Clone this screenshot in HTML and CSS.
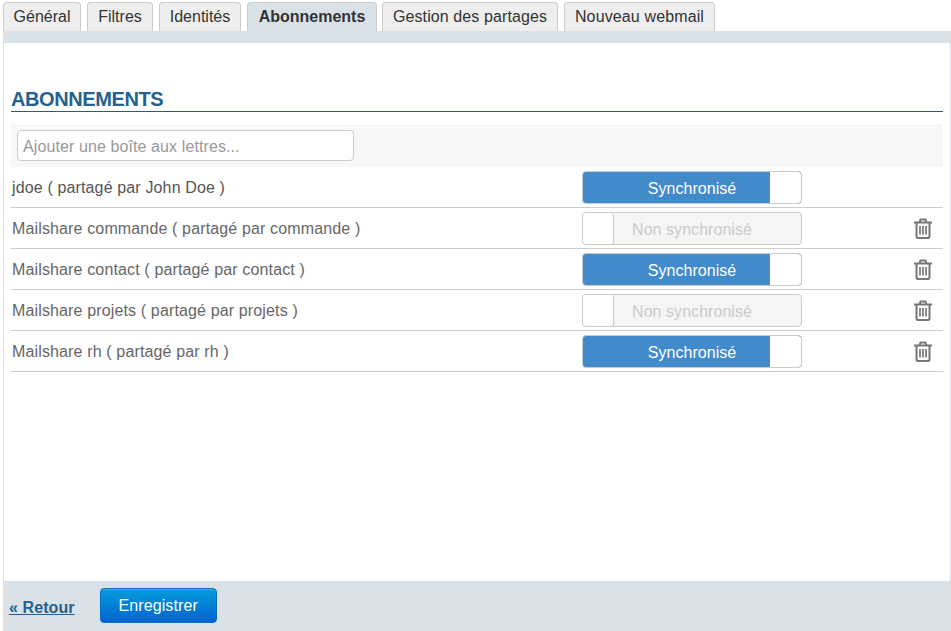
FILE: index.html
```html
<html>
  <head>
    <meta charset="utf-8">
    <title>Abonnements</title>
    <link rel="stylesheet" href="styles.css">
  </head>
  <body>
    <div class="tabs">
      <a class="tab tab-general">Général</a>
      <a class="tab tab-filters">Filtres</a>
      <a class="tab tab-identities">Identités</a>
      <a class="tab tab-subs active">Abonnements</a>
      <a class="tab tab-shares">Gestion des partages</a>
      <a class="tab tab-webmail">Nouveau webmail</a>
    </div>
    <div class="band"></div>

    <div class="content">
      <h2 class="title">ABONNEMENTS</h2>
      <div class="add-row">
        <input class="add-input" type="text" placeholder="Ajouter une boîte aux lettres...">
      </div>

      <div class="row first">
        <span class="name dark">jdoe ( partagé par John Doe )</span>
        <div class="switch on"><span class="label">Synchronisé</span><span class="knob"></span></div>
        <span class="trash"></span>
      </div>
      <div class="row">
        <span class="name">Mailshare commande ( partagé par commande )</span>
        <div class="switch off"><span class="knob"></span><span class="label">Non synchronisé</span></div>
        <span class="trash">
          <svg width="18" height="21" viewBox="0 0 18 21"><use href="#trash-icon"></use></svg>
        </span>
      </div>
      <div class="row">
        <span class="name">Mailshare contact ( partagé par contact )</span>
        <div class="switch on"><span class="label">Synchronisé</span><span class="knob"></span></div>
        <span class="trash">
          <svg width="18" height="21" viewBox="0 0 18 21"><use href="#trash-icon"></use></svg>
        </span>
      </div>
      <div class="row">
        <span class="name">Mailshare projets ( partagé par projets )</span>
        <div class="switch off"><span class="knob"></span><span class="label">Non synchronisé</span></div>
        <span class="trash">
          <svg width="18" height="21" viewBox="0 0 18 21"><use href="#trash-icon"></use></svg>
        </span>
      </div>
      <div class="row">
        <span class="name">Mailshare rh ( partagé par rh )</span>
        <div class="switch on"><span class="label">Synchronisé</span><span class="knob"></span></div>
        <span class="trash">
          <svg width="18" height="21" viewBox="0 0 18 21"><use href="#trash-icon"></use></svg>
        </span>
      </div>
    </div>

    <div class="footer">
      <a class="back" href="#">« Retour</a>
      <button class="save">Enregistrer</button>
    </div>

    <svg class="defs" width="0" height="0">
      <symbol id="trash-icon" viewBox="0 0 18 21">
        <path d="M0 4.5h18M5.5 4.5 6.5 1.5h5l1 3M2.5 4.5v13.7q0 1.8 1.8 1.8h9.4q1.8 0 1.8-1.8V4.5" fill="none" stroke="#777" stroke-width="2"/>
        <path d="M6 8v8.5M9 8v8.5M12 8v8.5" fill="none" stroke="#777" stroke-width="1.7"/>
      </symbol>
    </svg>
  </body>
</html>
```

FILE: styles.css
```css
* {
  box-sizing: border-box;
}
html,
body {
  margin: 0;
  height: 100%;
}
body {
  display: flex;
  flex-direction: column;
  height: 631px;
  overflow: hidden;
  background: #fff;
  font-family: "Liberation Sans", Arial, sans-serif;
  font-size: 16px;
  color: #666;
}

/* tabs */
.tabs {
  display: flex;
  gap: 6px;
  height: 31px;
  padding: 2px 0 0 3px;
}
.tab {
  height: 29px;
  line-height: 28px;
  text-align: center;
  color: #333;
  background: #eee;
  border: 1px solid #ccc;
  border-bottom: none;
  border-radius: 4px 4px 0 0;
}
.tab.active {
  font-weight: bold;
  background: #dae2e8;
}
.tab-general {
  width: 78px;
}
.tab-filters {
  width: 66px;
}
.tab-identities {
  width: 82px;
}
.tab-subs {
  width: 130px;
  margin-right: -1px;
}
.tab-shares {
  width: 176px;
  letter-spacing: 0.1px;
}
.tab-webmail {
  width: 151px;
  letter-spacing: 0.13px;
}
.band {
  height: 12px;
  margin-left: 3px;
  background: #dae2e8;
}

/* content */
.content {
  flex: 1;
  margin-left: 3px;
  padding: 46px 7px 0 7px;
  border-left: 1px solid #dae2e8;
  border-right: 1px solid #dae2e8;
}
.title {
  margin: 0;
  height: 23px;
  line-height: 21px;
  font-size: 20px;
  letter-spacing: -0.4px;
  font-weight: bold;
  color: #246190;
  border-bottom: 1px solid #2c5a7d;
}
.add-row {
  height: 43px;
  margin-top: 12px;
  padding: 6px;
  background: #f7f7f7;
}
.add-input {
  display: block;
  width: 337px;
  height: 31px;
  padding: 2px 5px 0;
  font-family: inherit;
  font-size: 16px;
  letter-spacing: 0.1px;
  background: #fff;
  border: 1px solid #ccc;
  border-radius: 4px;
}
.add-input::placeholder {
  color: #999;
  opacity: 1;
}
.row {
  display: flex;
  align-items: center;
  height: 41px;
  border-bottom: 1px solid #ccc;
}
.name {
  width: 571px;
  padding: 2px 0 0 1px;
  letter-spacing: 0.14px;
}
.name.dark {
  color: #555;
}

/* toggle */
.switch {
  position: relative;
  width: 220px;
  height: 33px;
  overflow: hidden;
  border: 1px solid #ccc;
  border-radius: 4px;
  text-align: center;
  line-height: 33px;
}
.switch .label {
  display: block;
  letter-spacing: 0.05px;
}
.switch .knob {
  position: absolute;
  top: 0;
  bottom: 0;
  width: 31px;
  background: #fff;
  border-radius: 3px;
  box-shadow: 0 1px 1px #ccc;
}
.switch.on {
  background: #428bca;
  color: #fff;
  border-color: #c8ccd0;
}
.switch.on .knob {
  right: 0;
  border-radius: 0 3px 3px 0;
}
.switch.off {
  background: #f5f5f5;
  color: #ccc;
}
.switch.off .knob {
  left: 0;
  border-right: 1px solid #ccc;
}
.trash {
  display: flex;
  justify-content: center;
  width: 18px;
  margin-left: 112px;
}
.trash svg {
  display: block;
}
.defs {
  position: absolute;
}

/* footer */
.footer {
  display: flex;
  align-items: center;
  gap: 25px;
  height: 50px;
  margin-left: 3px;
  padding: 0 0 0 6px;
  background: #dae2e8;
}
.back {
  margin-top: 3px;
  font-weight: bold;
  letter-spacing: 0.1px;
  color: #246190;
}
.save {
  width: 117px;
  height: 35px;
  margin-bottom: 1px;
  padding: 0;
  font-family: inherit;
  font-size: 16px;
  letter-spacing: 0.1px;
  color: #fff;
  background: linear-gradient(#049cdb, #0064cd);
  border: 1px solid #0a6bc4;
  border-radius: 4px;
  box-shadow: inset 0 1px 0 rgba(255, 255, 255, 0.2);
}
```
